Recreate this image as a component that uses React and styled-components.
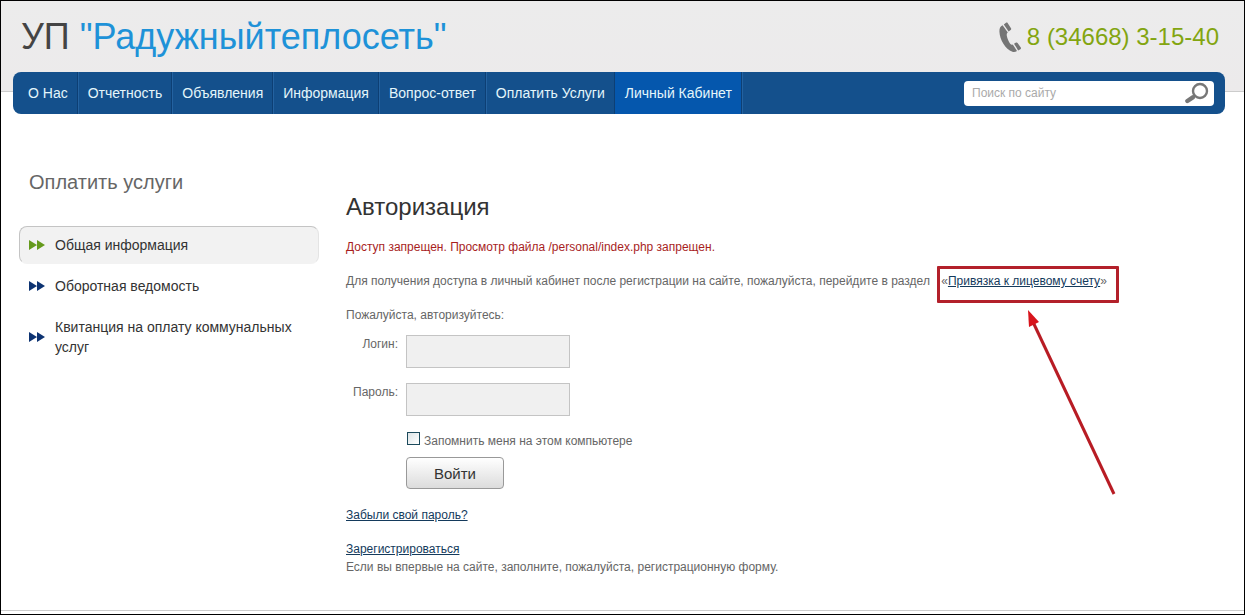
import React from "react";
import styled, { createGlobalStyle } from "styled-components";

const navItems = [
  { label: "О Нас" },
  { label: "Отчетность" },
  { label: "Объявления" },
  { label: "Информация" },
  { label: "Вопрос-ответ" },
  { label: "Оплатить Услуги" },
  { label: "Личный Кабинет", active: true },
];

const sideItems = [
  { label: "Общая информация", active: true },
  { label: "Оборотная ведомость" },
  { label: "Квитанция на оплату коммунальных услуг" },
];

const PhoneIcon = () => (
  <svg width="24" height="32" viewBox="0 0 24 32" aria-hidden="true">
    <g fill="#757575">
      <path d="M3.6 4.2C1.2 5 0.4 7.4 0.4 10.4C0.8 19 6.4 27.8 13.4 30.8C15 31.4 16.6 31 18 30L13.8 23.6C12.8 24 12 23.8 11.2 22.8C9.6 20.6 8.4 17.8 7.8 14.8C7.6 13.4 7.8 12.2 8.8 11.6Z" />
      <path d="M4.8 3.6L7 1.8C7.6 1.4 8.2 1.4 8.6 2L12 7.2C12.4 7.8 12.2 8.6 11.6 9L9.6 10.6Z" />
      <path d="M15 22.8L17 21.6C17.6 21.2 18.2 21.4 18.6 22L21.8 26.6C22.2 27.2 22 27.8 21.4 28.2L19.2 29.4Z" />
    </g>
  </svg>
);

const SearchIcon = () => (
  <svg width="26" height="22" viewBox="0 0 26 22" aria-hidden="true">
    <circle cx="16" cy="9" r="7" fill="none" stroke="#777" strokeWidth="2.4" />
    <path d="M10.6 14L8.8 15.4" stroke="#777" strokeWidth="2.6" />
    <path d="M8.8 15.4L3.4 19" stroke="#777" strokeWidth="4.4" strokeLinecap="round" />
  </svg>
);

const Arrows = () => (
  <svg width="16" height="12" viewBox="0 0 16 12" aria-hidden="true">
    <path d="M0 1L8 6L0 11ZM8 1L16 6L8 11Z" fill="currentColor" />
  </svg>
);

const App = () => {
  return (
    <>
      <GlobalStyle />
      <Page>
        <Header>
          <TopBar>
            <Logo>
              УП <span>"Радужныйтеплосеть"</span>
            </Logo>
            <Phone>
              <PhoneIcon />
              8 (34668) 3-15-40
            </Phone>
          </TopBar>
          <Nav>
            <NavList>
              {navItems.map((item) => (
                <li key={item.label}>
                  <NavLink href="#" $active={item.active}>
                    {item.label}
                  </NavLink>
                </li>
              ))}
            </NavList>
            <Search>
              <input
                type="text"
                aria-label="Поиск по сайту"
                placeholder="Поиск по сайту"
              />
              <button type="button" aria-label="Найти">
                <SearchIcon />
              </button>
            </Search>
          </Nav>
        </Header>

        <Content>
          <Sidebar>
            <SideTitle>Оплатить услуги</SideTitle>
            <SideList>
              {sideItems.map((item) => (
                <li key={item.label}>
                  <SideLink href="#" $active={item.active}>
                    <Arrows />
                    <span>{item.label}</span>
                  </SideLink>
                </li>
              ))}
            </SideList>
          </Sidebar>

          <Main>
            <Title>Авторизация</Title>
            <Text $error>
              Доступ запрещен. Просмотр файла /personal/index.php запрещен.
            </Text>
            <Text>
              Для получения доступа в личный кабинет после регистрации на сайте,
              пожалуйста, перейдите в раздел{" "}
              <Marked>
                «<TextLink href="#">Привязка к лицевому счету</TextLink>»
                <Frame />
                <Pointer width="92" height="190" viewBox="0 0 92 190">
                  <path d="M6 12L87 184" stroke="#b81c24" strokeWidth="3" />
                  <path d="M1 0L12 12L2 17Z" fill="#d8141c" />
                </Pointer>
              </Marked>
            </Text>
            <Text>Пожалуйста, авторизуйтесь:</Text>

            <Form onSubmit={(e) => e.preventDefault()}>
              <label htmlFor="login">Логин:</label>
              <Field id="login" type="text" />
              <label htmlFor="password">Пароль:</label>
              <Field id="password" type="password" />
              <Actions>
                <Remember>
                  <input type="checkbox" />
                  Запомнить меня на этом компьютере
                </Remember>
                <Submit type="submit">Войти</Submit>
              </Actions>
            </Form>

            <Text>
              <TextLink href="#">Забыли свой пароль?</TextLink>
            </Text>
            <Text>
              <TextLink href="#">Зарегистрироваться</TextLink>
              <br />
              Если вы впервые на сайте, заполните, пожалуйста, регистрационную
              форму.
            </Text>
          </Main>
        </Content>
        <Footer />
      </Page>
    </>
  );
};

const GlobalStyle = createGlobalStyle`
  * {
    box-sizing: border-box;
  }

  body {
    margin: 0;
    background: #fff;
    color: #666;
    font-family: "Liberation Sans", Arial, sans-serif;
    font-size: 12px;
    line-height: 18px;
  }

  ul,
  h1,
  h2,
  p {
    margin: 0;
    padding: 0;
    list-style: none;
    font-weight: 400;
  }

  input,
  button {
    font-family: inherit;
  }
`;

const Page = styled.div`
  display: flex;
  flex-direction: column;
  min-height: 100vh;
  border: 1px solid #000;
`;

const Header = styled.header`
  padding: 0 19px 0 12px;
  background: linear-gradient(#ececec, #eceaeb) no-repeat 0 0 / 100% 90px,
    linear-gradient(#ccc, #ccc) no-repeat 0 90px / 100% 1px;
`;

const TopBar = styled.div`
  display: flex;
  justify-content: space-between;
  align-items: center;
  height: 71px;
  padding: 0 6px 0 8px;
`;

const Logo = styled.div`
  font-size: 36px;
  line-height: 40px;
  color: #444;

  span {
    color: #1e92d8;
  }
`;

const Phone = styled.div`
  display: flex;
  align-items: center;
  gap: 4px;
  font-size: 24px;
  line-height: 32px;
  color: #83a510;
`;

const Nav = styled.nav`
  display: flex;
  justify-content: space-between;
  align-items: center;
  height: 42px;
  padding: 0 11px 0 5px;
  border-radius: 8px;
  background: #14508c;
`;

const NavList = styled.ul`
  display: flex;
`;

const NavLink = styled.a`
  display: block;
  padding: 0 9px 0 10px;
  border-right: 1px solid #0d3f74;
  box-shadow: 1px 0 0 #2462a0;
  font-size: 14px;
  line-height: 42px;
  color: #e4f6fb;
  text-decoration: none;
  white-space: nowrap;
  background: ${(props) => (props.$active ? "#0557ad" : "transparent")};
`;

const Search = styled.div`
  display: flex;
  align-items: center;
  width: 250px;
  height: 25px;
  padding: 0 4px 0 8px;
  border-radius: 4px;
  background: #fff;

  input {
    flex: 1;
    min-width: 0;
    padding: 0;
    border: 0;
    outline: 0;
    background: none;
    font-size: 12px;
    color: #666;
  }

  input::placeholder {
    color: #aaa;
  }

  button {
    display: flex;
    padding: 0;
    border: 0;
    background: none;
  }
`;

const Content = styled.div`
  display: flex;
  flex: 1;
  gap: 27px;
  padding: 56px 18px 16px;
`;

const Sidebar = styled.aside`
  flex: 0 0 300px;
`;

const SideTitle = styled.h2`
  padding: 0 10px;
  font-size: 20px;
  line-height: 24px;
  color: #666;
`;

const SideList = styled.ul`
  display: flex;
  flex-direction: column;
  gap: 3px;
  margin-top: 32px;
`;

const SideLink = styled.a`
  display: flex;
  align-items: center;
  gap: 10px;
  padding: 8px 16px 8px 9px;
  border: 1px solid transparent;
  border-radius: 8px;
  font-size: 14px;
  line-height: 20px;
  color: #333;
  text-decoration: none;
  border-color: ${(props) =>
    props.$active ? "#c4c4c4 #e4e4e4 #f2f2f2 #c4c4c4" : "transparent"};
  background: ${(props) => (props.$active ? "#f2f2f2" : "transparent")};

  svg {
    flex: none;
    color: ${(props) => (props.$active ? "#659a1c" : "#0d3372")};
  }
`;

const Main = styled.main`
  flex: 1;
  min-width: 0;
  padding-top: 23px;
`;

const Title = styled.h1`
  margin-bottom: 17px;
  font-size: 24px;
  line-height: 28px;
  color: #333;
`;

const Text = styled.p`
  margin-bottom: 16px;
  color: ${(props) => (props.$error ? "#a81e1e" : "#666")};
`;

const TextLink = styled.a`
  color: #143a5c;
  text-decoration: underline;
`;

const Marked = styled.span`
  position: relative;
  margin: 0 8px;
  white-space: nowrap;
`;

/* red marker drawn over the link */
const Frame = styled.span`
  position: absolute;
  inset: -8px -12px -15px -4px;
  border: 3px solid #b3202a;
  border-radius: 1px;
`;

const Pointer = styled.svg`
  position: absolute;
  top: 36px;
  left: 86px;
`;

const Form = styled.form`
  display: grid;
  grid-template-columns: 52px 1fr;
  gap: 15px 8px;
  margin: -5px 0 17px;

  > label {
    text-align: right;
  }
`;

const Field = styled.input`
  width: 164px;
  height: 33px;
  padding: 0 8px;
  border: 1px solid #c4c4c4;
  background: #f0f0f0;
  font-size: 14px;
`;

const Actions = styled.div`
  grid-column: 2;
  display: flex;
  flex-direction: column;
  align-items: flex-start;
  gap: 7px;
  padding-top: 1px;
`;

const Remember = styled.label`
  display: flex;
  align-items: center;
  gap: 4px;

  input {
    appearance: none;
    width: 13px;
    height: 13px;
    margin: 0 0 5px 1px;
    border: 1px solid #1c4a5c;
    background: linear-gradient(135deg, #dde4e6, #fff);
  }

  input:checked {
    background: #1c4a5c;
  }
`;

const Submit = styled.button`
  width: 98px;
  height: 32px;
  border: 1px solid #999;
  border-radius: 4px;
  background: linear-gradient(#fff, #dcdcdc);
  font-size: 15px;
  color: #333;
`;

const Footer = styled.footer`
  height: 4px;
  border-top: 1px solid #ccc;
`;

export default App;
